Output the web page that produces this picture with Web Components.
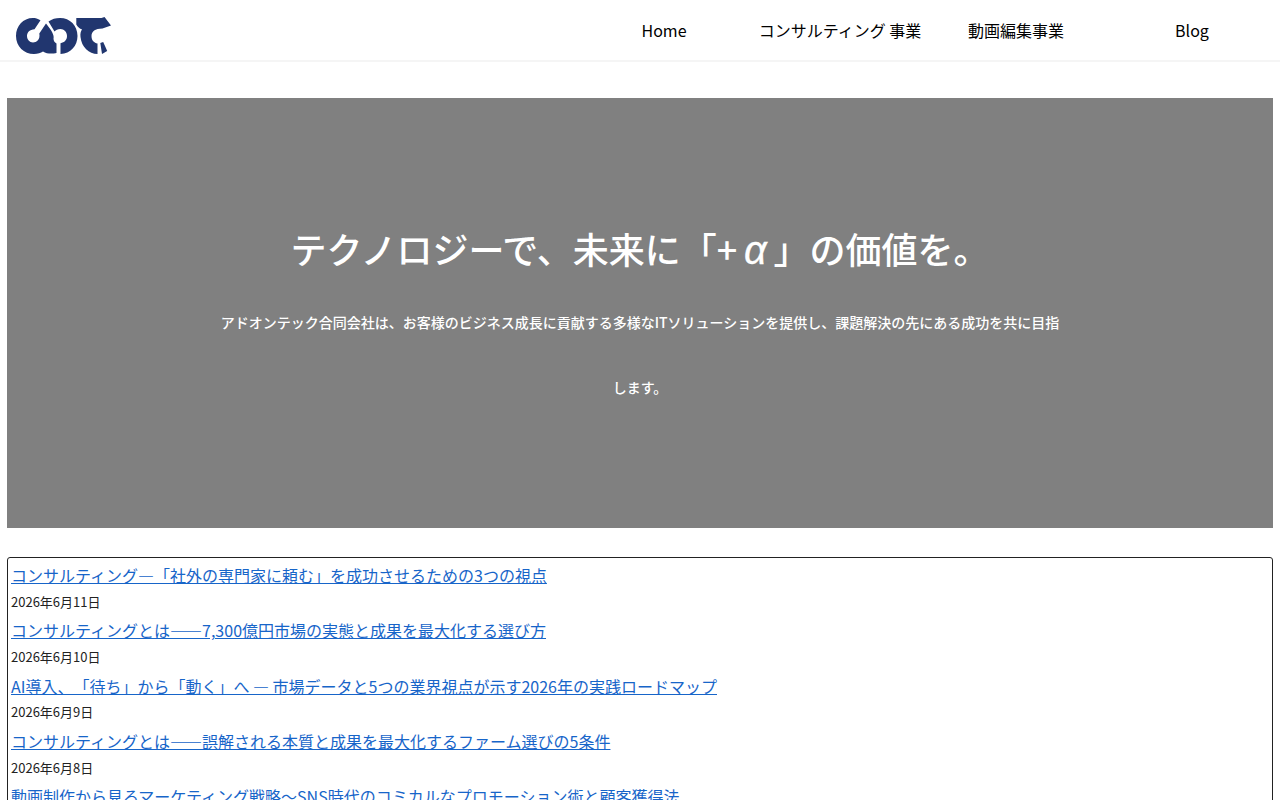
<!DOCTYPE html>
<html lang="ja">
<head>
<meta charset="utf-8">
<title>アドオンテック合同会社</title>
<style>
  body {
    margin: 0;
    height: 800px;
    overflow: hidden;
    background: #fff;
    color: #222;
    font-family: 'Noto Sans CJK JP', sans-serif;
    font-size: 16px;
    text-spacing-trim: space-all;
  }
  .alpha {
    display: inline-block;
    width: 36px;
    font-family: 'Liberation Sans', sans-serif;
    font-size: 40px;
    font-style: italic;
    font-weight: 400;
    line-height: 1;
    text-align: center;
    -webkit-text-stroke: 0.3px;
  }
</style>
</head>
<body>
<site-header>
  <nav-item>Home</nav-item>
  <nav-item>コンサルティング 事業</nav-item>
  <nav-item>動画編集事業</nav-item>
  <nav-item>Blog</nav-item>
</site-header>
<hero-banner>
  <span slot="title">テクノロジーで、未来に「+<span class="alpha">α</span>」の価値を。</span>
  アドオンテック合同会社は、お客様のビジネス成長に貢献する多様なITソリューションを提供し、課題解決の先にある成功を共に目指します。
</hero-banner>
<post-list>
  <post-item date="2026年6月11日">コンサルティング—「社外の専門家に頼む」を成功させるための3つの視点</post-item>
  <post-item date="2026年6月10日">コンサルティングとは――7,300億円市場の実態と成果を最大化する選び方</post-item>
  <post-item date="2026年6月9日">AI導入、「待ち」から「動く」へ — 市場データと5つの業界視点が示す2026年の実践ロードマップ</post-item>
  <post-item date="2026年6月8日">コンサルティングとは――誤解される本質と成果を最大化するファーム選びの5条件</post-item>
  <post-item>動画制作から見るマーケティング戦略〜SNS時代のコミカルなプロモーション術と顧客獲得法</post-item>
</post-list>

<script>
const attach = (host, html) => {
  host.attachShadow({ mode: 'open' }).innerHTML = html;
};

class SiteLogo extends HTMLElement {
  constructor() {
    super();
    attach(this, `
      <style>
        :host { display: block; width: 96px; height: 38px; }
        svg { display: block; }
      </style>
      <svg width="96" height="38" viewBox="0 0 96 38" fill="#21366f">
        <path d="M24.500 3.200C21.500 1.600 19.500 1 17 1C7 1 0 9 0 19C0 29.500 8 37 18 37C22 37 24.500 36 27 34.500C31 37 36 37 40.500 36V26.500C38.500 25.500 37.500 23.500 37.500 21.500C38.500 18.500 35.500 13 30 6.500L23.300 16.500C24.500 22.500 20.500 25.500 17 25.500C13.500 25.500 11 22.500 11 19C11 15.500 13.800 12.500 18.500 12.300Z"/>
        <path d="M32.500 4.500C36 2 39.500 1 44 1C54 1 61.500 8.500 61.500 19C61.500 29 54.500 36.500 44.500 37V26.200C48.500 25.500 51 23 51 19C51 15 48 12 44.500 12C41.500 12 40 13 38.500 14.500Z"/>
        <path d="M60.300 1H85.500L88.500 0L95 8.500L86.500 11.500C79 11.500 75.500 14.500 75.500 19C75.500 23 77.500 25.800 81.500 26.500V37C73 37 65.500 30 64.500 20C64 16.500 65 13.500 66.200 12.500C64.500 12 62 10.500 60.300 7.500Z"/>
        <path d="M84.300 26L87.200 25L91.200 34L86 37Z"/>
      </svg>
    `);
  }
}
customElements.define('site-logo', SiteLogo);

class SiteHeader extends HTMLElement {
  constructor() {
    super();
    attach(this, `
      <style>
        :host {
          display: flex;
          justify-content: space-between;
          box-sizing: border-box;
          height: 62px;
          border-bottom: 2px solid #f5f5f5;
        }
        site-logo { margin: 17px 0 0 16px; }
        nav { display: grid; grid-template-columns: repeat(4, 176px); }
      </style>
      <site-logo></site-logo>
      <nav><slot></slot></nav>
    `);
  }
}
customElements.define('site-header', SiteHeader);

class NavItem extends HTMLElement {
  constructor() {
    super();
    attach(this, `
      <style>
        :host {
          display: block;
          color: #000;
          line-height: 60px;
          text-align: center;
          white-space: nowrap;
        }
      </style>
      <slot></slot>
    `);
  }
}
customElements.define('nav-item', NavItem);

class HeroBanner extends HTMLElement {
  constructor() {
    super();
    attach(this, `
      <style>
        :host {
          display: flex;
          flex-direction: column;
          align-items: center;
          box-sizing: border-box;
          height: 430px;
          margin: 36px 7px 0;
          padding-top: 118px;
          background: #808080;
          color: #fff;
          text-align: center;
        }
        h1 {
          height: 65px;
          margin: 0;
          font-size: 36px;
          font-weight: 500;
          line-height: 65px;
        }
        p {
          width: 844px;
          margin: 9px 0 0;
          font-size: 14px;
          font-weight: 500;
          line-height: 65px;
        }
      </style>
      <h1><slot name="title"></slot></h1>
      <p><slot></slot></p>
    `);
  }
}
customElements.define('hero-banner', HeroBanner);

class PostList extends HTMLElement {
  constructor() {
    super();
    attach(this, `
      <style>
        :host {
          display: block;
          margin: 29px 7px 0;
          padding: 3px;
          border: 1px solid #222;
          border-radius: 3px;
        }
      </style>
      <slot></slot>
    `);
  }
}
customElements.define('post-list', PostList);

class PostItem extends HTMLElement {
  constructor() {
    super();
    attach(this, `
      <style>
        :host { display: block; height: 55.3px; }
        a {
          display: block;
          color: #1765c9;
          line-height: 28.8px;
          text-decoration: underline;
          white-space: nowrap;
        }
        time { display: block; font-size: 13px; line-height: 23.4px; }
      </style>
      <a><slot></slot></a>
      <time></time>
    `);
  }

  connectedCallback() {
    this.shadowRoot.querySelector('time').textContent = this.getAttribute('date');
  }
}
customElements.define('post-item', PostItem);
</script>
</body>
</html>
